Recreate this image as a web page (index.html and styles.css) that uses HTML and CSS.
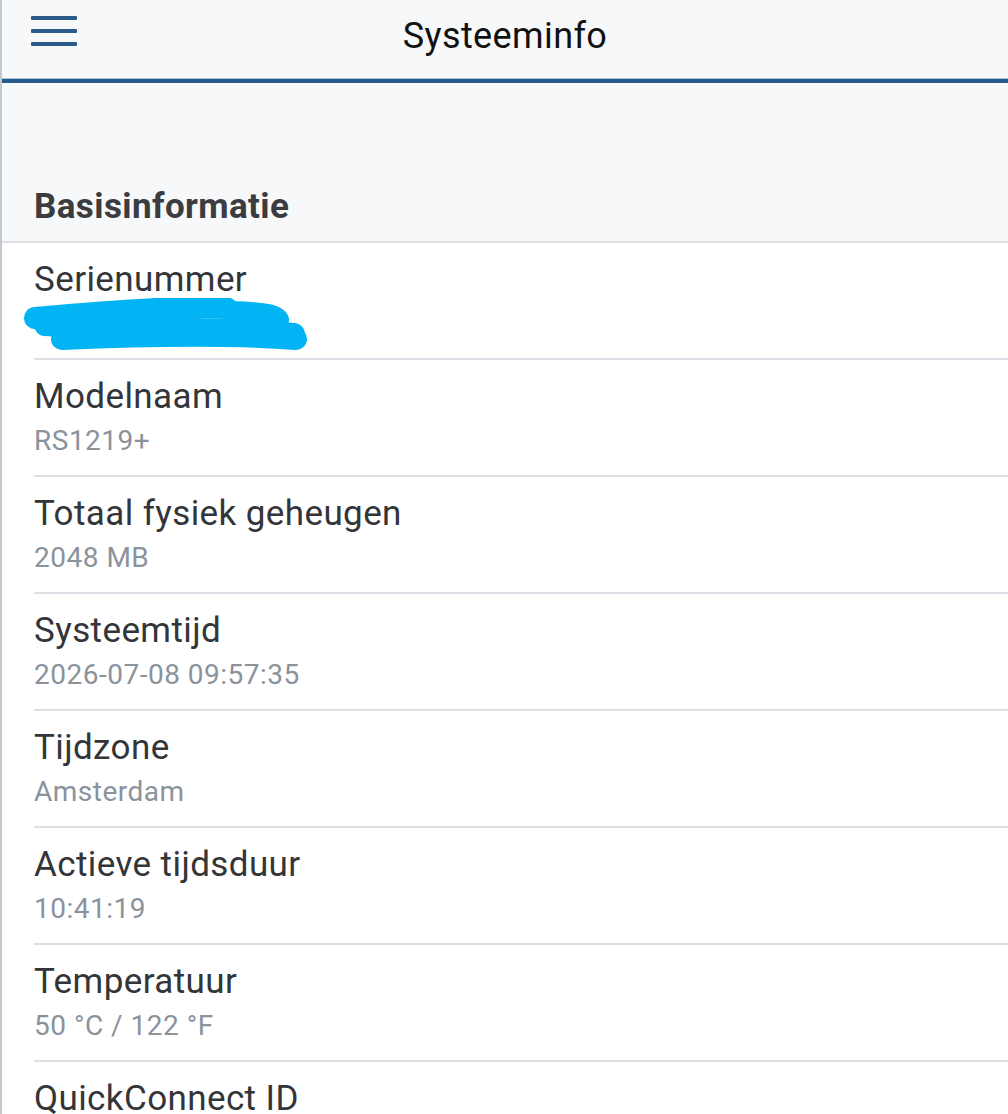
FILE: index.html
```html
<!DOCTYPE html>
<html lang="nl">
<head>
<meta charset="utf-8">
<title>Systeeminfo</title>
<link rel="stylesheet" href="styles.css">
</head>
<body>
<div class="app">
  <header class="topbar">
    <button class="menu" aria-label="Menu">
      <svg width="46" height="32" viewBox="0 0 46 32"><rect x="0" y="0" width="46" height="4" rx="1"/><rect x="0" y="13" width="46" height="4" rx="1"/><rect x="0" y="26" width="46" height="4" rx="1"/></svg>
    </button>
    <h1 class="title">Systeeminfo</h1>
  </header>
  <section class="section">
    <h2 class="section-title">Basisinformatie</h2>
    <ul class="list">
      <li class="row"><div class="label">Serienummer</div><div class="redacted"><svg width="292" height="58" viewBox="20 298 292 58"><path d="M35 318 C 100 312, 180 306, 226 308 L 232 312 C 262 313, 276 315, 278 320"/><path d="M45 325 C 120 330, 210 326, 294 334"/><path d="M62 339 C 150 335, 230 334, 296 339"/></svg></div></li>
      <li class="row"><div class="label">Modelnaam</div><div class="value">RS1219+</div></li>
      <li class="row"><div class="label">Totaal fysiek geheugen</div><div class="value">2048 MB</div></li>
      <li class="row"><div class="label">Systeemtijd</div><div class="value">2026-07-08 09:57:35</div></li>
      <li class="row"><div class="label">Tijdzone</div><div class="value">Amsterdam</div></li>
      <li class="row"><div class="label">Actieve tijdsduur</div><div class="value">10:41:19</div></li>
      <li class="row"><div class="label">Temperatuur</div><div class="value">50 °C / 122 °F</div></li>
      <li class="row"><div class="label">QuickConnect ID</div><div class="value">&nbsp;</div></li>
    </ul>
  </section>
</div>
</body>
</html>
```
FILE: styles.css
```css
* { box-sizing: border-box; }
html, body { margin: 0; padding: 0; }
body {
  font-family: Roboto, "Noto Sans", "Liberation Sans", sans-serif;
  background: #f6f8fa;
  height: 1114px;
  overflow: hidden;
}
.app {
  border-left: 2px solid #c4c7cb;
  min-height: 1114px;
  background: #f6f8fa;
}
.topbar {
  height: 83px;
  display: flex;
  align-items: flex-start;
  position: relative;
  border-bottom: 4px solid #275b8b;
  box-shadow: 0 -1px 0 #a9c3dc inset;
}
.menu {
  margin: 16px 0 0 29px;
  padding: 0;
  border: 0;
  background: none;
  display: flex;
}
.menu svg { fill: #2b5b8a; }
.title {
  position: absolute;
  left: 0;
  right: 0;
  top: 18px;
  margin: 0;
  text-align: center;
  font-weight: 400;
  font-size: 36px;
  line-height: 36px;
  letter-spacing: 0.4px;
  color: #111;
}
.section-title {
  margin: 0;
  height: 160px;
  padding: 106px 0 0 32px;
  font-size: 35px;
  line-height: 35px;
  letter-spacing: 0.4px;
  font-weight: 700;
  color: #3a3c40;
  border-bottom: 2px solid #dcdfe4;
}
.list {
  list-style: none;
  margin: 0;
  padding: 0;
  background: #fff;
}
.row {
  height: 117px;
  margin-left: 32px;
  padding-top: 17px;
  border-bottom: 2px solid #dcdfe6;
}
.label {
  font-size: 35px;
  line-height: 40px;
  letter-spacing: 0.4px;
  color: #333539;
}
.value {
  font-size: 28px;
  line-height: 34px;
  letter-spacing: 0.5px;
  margin-top: 7px;
  color: #8a939c;
}
.redacted { margin-left: -14px; margin-top: -2px; }
.redacted svg { display: block; }
.redacted path {
  fill: none;
  stroke: #03b4f4;
  stroke-width: 22;
  stroke-linecap: round;
  stroke-linejoin: round;
}
```
